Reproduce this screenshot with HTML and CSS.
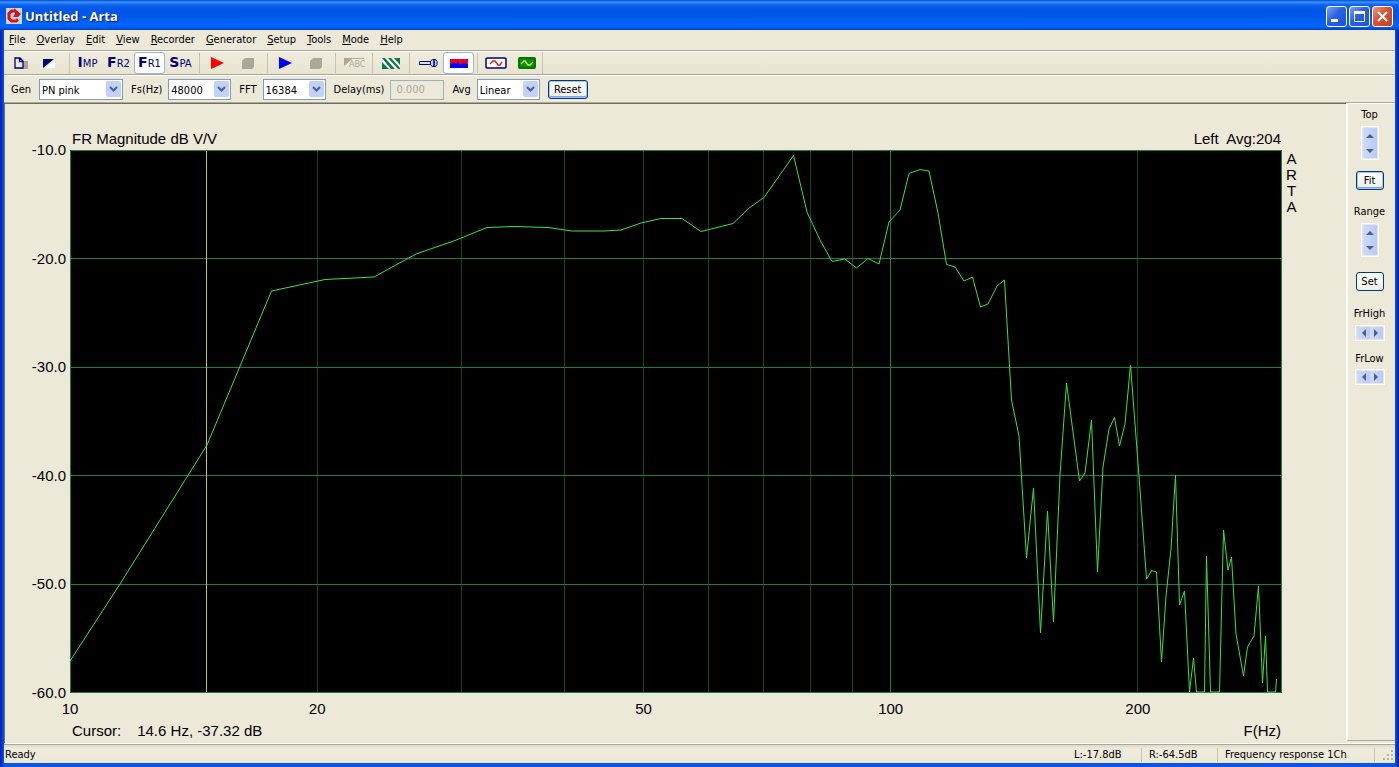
FILE: index.html
```html
<!DOCTYPE html>
<html lang="en">
<head>
<meta charset="utf-8">
<title>Untitled - Arta</title>
<link rel="stylesheet" href="styles.css">
</head>
<body>
<div class="window">
  <header class="titlebar">
    <svg class="app-icon" width="16" height="16" viewBox="0 0 16 16">
      <rect width="16" height="16" fill="#c8d8d8"/>
      <path d="M12 11.500l-2 1.500H5.500L3 10.500v-5L5.500 3H9" fill="none" stroke="#d81018" stroke-width="3"/>
      <path d="M8 0l7 6-3 3H7l2-3z" fill="#d81018"/>
    </svg>
    <h1 class="title">Untitled - Arta</h1>
    <div class="caption-buttons">
      <button class="caption" aria-label="Minimize"><svg width="19" height="19" viewBox="0 0 19 19"><rect x="4" y="12" width="7" height="3" fill="#fff"/></svg></button>
      <button class="caption" aria-label="Maximize"><svg width="19" height="19" viewBox="0 0 19 19"><path d="M4.500 5v9.500h10V5M4 5.500h11" fill="none" stroke="#fff"/><rect x="4" y="4" width="11" height="3" fill="#fff"/></svg></button>
      <button class="caption close" aria-label="Close"><svg width="19" height="19" viewBox="0 0 19 19"><path d="M5 5l9 9M14 5l-9 9" stroke="#fff" stroke-width="2.200"/></svg></button>
    </div>
  </header>

  <div class="client">
    <nav class="menubar">
      <button><u>F</u>ile</button><button><u>O</u>verlay</button><button><u>E</u>dit</button><button><u>V</u>iew</button><button><u>R</u>ecorder</button><button><u>G</u>enerator</button><button><u>S</u>etup</button><button><u>T</u>ools</button><button><u>M</u>ode</button><button><u>H</u>elp</button>
    </nav>

    <div class="toolbar">
      <div class="tools">
      <button class="tool" aria-label="New"><svg width="20" height="16" viewBox="0 0 20 16"><path d="M13 6h5v8H9v-1z" fill="#aca899"/><path d="M5 3h5l3 3v7H5zM9.500 3v3.500H13" fill="#ece9d8" stroke="#00007b" stroke-width="1.300"/></svg></button>
      <button class="tool" aria-label="Invert"><svg width="20" height="16" viewBox="0 0 20 16"><path d="M14 4v9H5z" fill="#fff"/><path d="M2 4h11L2 13z" fill="#00007b"/></svg></button>
      <span class="sep"></span>
      <button class="tool word"><b>I</b>MP</button>
      <button class="tool word"><b>F</b>R2</button>
      <button class="tool word pressed"><b>F</b>R1</button>
      <button class="tool word"><b>S</b>PA</button>
      <span class="sep"></span>
      <button class="tool" aria-label="Record"><svg width="20" height="16" viewBox="0 0 20 16"><path d="M3 2l13 6-13 6z" fill="#f00"/></svg></button>
      <button class="tool" aria-label="Stop recording"><svg width="20" height="16" viewBox="0 0 20 16"><path d="M6 3h9v9l-2 2H3V6z" fill="#aca899"/></svg></button>
      <span class="sep"></span>
      <button class="tool" aria-label="Play"><svg width="20" height="16" viewBox="0 0 20 16"><path d="M3 2l13 6-13 6z" fill="#00f"/></svg></button>
      <button class="tool" aria-label="Stop playing"><svg width="20" height="16" viewBox="0 0 20 16"><path d="M6 3h9v9l-2 2H3V6z" fill="#aca899"/></svg></button>
      <span class="sep"></span>
      <button class="tool abc" disabled><svg width="20" height="16" viewBox="0 0 20 16"><path d="M0 3h20v1H8L0 11z" fill="#aca899"/><path d="M2 11l6-6h11" fill="none" stroke="#fff"/></svg><span>ABC</span></button>
      <span class="sep"></span>
      <button class="tool" aria-label="Colors"><svg width="20" height="16" viewBox="0 0 20 16"><rect x="1" y="3" width="18" height="11" fill="#fff"/><path d="M1 3h3l10 11h-4zM1 7l7 7H1zM7 3h3l9 10v1h-2zM13 3h6v7z" fill="#087848"/></svg></button>
      <span class="sep"></span>
      <button class="tool" aria-label="Calibrate"><svg width="20" height="16" viewBox="0 0 20 16"><path d="M1.500 6.500h11v3h-11z" fill="#d8e0e8" stroke="#00007b"/><path d="M12.500 6l2-1.500h3l1.500 2v3l-1.500 2h-3l-2-1.500z" fill="#c8d0f0" stroke="#00007b"/><path d="M16 4v8" stroke="#00007b" stroke-width="1.500"/></svg></button>
      <button class="tool pressed" aria-label="Overlay fill"><svg width="20" height="16" viewBox="0 0 20 16"><rect x="1" y="4" width="18" height="9" fill="#00f"/><path d="M2 4h16l1 1v4h-2l-2-2-2 2-1 1-3-3-2 2-2-2-2 2-2-1V5z" fill="#f00020"/></svg></button>
      <span class="sep"></span>
      <button class="tool" aria-label="Time record"><svg width="22" height="16" viewBox="0 0 22 16"><rect x="1" y="3" width="20" height="10" rx="1" fill="#fff" stroke="#00007b" stroke-width="1.500"/><path d="M5 9l3-3h2l3 4h2l2-3" fill="none" stroke="#e02020" stroke-width="1.400"/></svg></button>
      <button class="tool" aria-label="Spectrum"><svg width="20" height="16" viewBox="0 0 20 16"><rect x="1" y="2" width="18" height="12" rx="2" fill="#007800"/><rect x="3" y="4" width="14" height="8" fill="#0a8c10"/><path d="M4 9l3-3h1l3 4h2l3-3" fill="none" stroke="#d8f040" stroke-width="1.300"/></svg></button>
      </div>
    </div>

    <form class="params">
      <label class="field gen"><span>Gen</span><span class="combo w84"><select><option>PN pink</option></select><svg class="drop" width="15" height="16" viewBox="0 0 15 16"><rect width="15" height="16" rx="2"/><path d="M4 6l3.500 3.500L11 6"/></svg></span></label>
      <label class="field"><span>Fs(Hz)</span><span class="combo"><select><option>48000</option></select><svg class="drop" width="15" height="16" viewBox="0 0 15 16"><rect width="15" height="16" rx="2"/><path d="M4 6l3.500 3.500L11 6"/></svg></span></label>
      <label class="field"><span>FFT</span><span class="combo"><select><option>16384</option></select><svg class="drop" width="15" height="16" viewBox="0 0 15 16"><rect width="15" height="16" rx="2"/><path d="M4 6l3.500 3.500L11 6"/></svg></span></label>
      <label class="field"><span>Delay(ms)</span><input type="text" value="0.000" disabled></label>
      <label class="field"><span>Avg</span><span class="combo"><select><option>Linear</option></select><svg class="drop" width="15" height="16" viewBox="0 0 15 16"><rect width="15" height="16" rx="2"/><path d="M4 6l3.500 3.500L11 6"/></svg></span></label>
      <button type="button" class="push default">Reset</button>
    </form>

    <div class="content">
      <main class="graph">
        <div class="heading"><span>FR Magnitude dB V/V</span><span class="avg">Left&nbsp; Avg:204</span></div>
        <div class="y-axis"><span>-10.0</span><span>-20.0</span><span>-30.0</span><span>-40.0</span><span>-50.0</span><span>-60.0</span></div>
        <div class="plot">
          <svg viewBox="70 150 1212 543" preserveAspectRatio="none" role="img" aria-label="Frequency response magnitude">
            <rect x="70" y="150" width="1212" height="543" fill="#000"/>
            <path class="minor" d="M317.500 150v543M461.500 150v543M564.500 150v543M643.500 150v543M708.500 150v543M763.500 150v543M810.500 150v543M852.500 150v543M1137.500 150v543"/>
            <path class="major" d="M890.500 150v543M70 258.500h1212M70 367.500h1212M70 475.500h1212M70 584.500h1212M70.500 150.500h1211v542h-1211z"/>
            <path class="cursor" d="M206.500 151v541"/>
            <polyline class="trace" points="70,661 120,584 207,445 271.500,291 325,279.500 374,277 416,254 455,240.500 487,227.500 515,226.500 548,227.500 572,231 604,231 621,230 641,223 661,218.500 682,218.500 701,231.500 733,223.500 749,208 764,197.500 793.500,155.500 807,212 820,240 832,261.500 845,259 856.500,268 868,258.500 879,264 889,222 900,210 909,173.500 920,169.500 929,171 938,213 946.500,264.500 955,267 964,281 972.500,277 980.500,307 988,304 997,286 1004.500,280 1011.500,400 1019,436 1026.500,558 1033.500,488 1040.500,633 1047.500,511 1053.500,622 1060,475 1066.500,383 1079.500,481 1085,473 1091.500,420 1097.500,572 1103,467 1109,429 1114.500,417.500 1119.500,446 1125,424 1130.500,365 1139,476 1146.500,579 1151.500,570.500 1156.500,572 1161.500,662 1166,596 1171,549 1175.500,475 1179.500,605 1184.500,591 1189.500,692 1193.500,658 1196.500,692 1204.500,692 1206.500,556 1210.500,692 1219.500,692 1223.500,530 1228,570 1231.500,557 1236,634 1243.500,676 1247.500,647 1254,636 1258.500,586 1262.500,683 1265.500,636 1267.500,692 1275.500,692 1276.500,679"/>
          </svg>
        </div>
        <div class="brand"><span>A</span><span>R</span><span>T</span><span>A</span></div>
        <div class="x-axis"><span>10</span><span>20</span><span>50</span><span>100</span><span>200</span></div>
        <div class="footing"><span>Cursor:</span><span>14.6 Hz, -37.32 dB</span><span class="unit">F(Hz)</span></div>
      </main>

      <aside class="side">
        <div class="group"><span>Top</span>
          <div class="spin vertical"><button aria-label="Top up"><svg width="12" height="13" viewBox="0 0 12 13"><path d="M2 9h8L6 5z"/></svg></button><button aria-label="Top down"><svg width="12" height="13" viewBox="0 0 12 13"><path d="M2 5h8L6 9z"/></svg></button></div>
          <button class="push small default">Fit</button></div>
        <div class="group range"><span>Range</span>
          <div class="spin vertical"><button aria-label="Range up"><svg width="12" height="13" viewBox="0 0 12 13"><path d="M2 9h8L6 5z"/></svg></button><button aria-label="Range down"><svg width="12" height="13" viewBox="0 0 12 13"><path d="M2 5h8L6 9z"/></svg></button></div>
          <button class="push small">Set</button></div>
        <div class="group fr"><span>FrHigh</span>
          <div class="spin"><button aria-label="FrHigh down"><svg width="13" height="12" viewBox="0 0 13 12"><path d="M9 2v8L5 6z"/></svg></button><button aria-label="FrHigh up"><svg width="13" height="12" viewBox="0 0 13 12"><path d="M4 2v8l4-4z"/></svg></button></div></div>
        <div class="group fr"><span>FrLow</span>
          <div class="spin"><button aria-label="FrLow down"><svg width="13" height="12" viewBox="0 0 13 12"><path d="M9 2v8L5 6z"/></svg></button><button aria-label="FrLow up"><svg width="13" height="12" viewBox="0 0 13 12"><path d="M4 2v8l4-4z"/></svg></button></div></div>
      </aside>
    </div>

    <footer class="statusbar">
      <span class="ready">Ready</span><span class="level">L:-17.8dB</span><span class="level second">R:-64.5dB</span><span class="mode">Frequency response 1Ch</span>
      <svg class="grip" width="20" height="16" viewBox="0 0 20 16"><path d="M16 3h2v2h-2zM12 7h2v2h-2zM16 7h2v2h-2zM8 11h2v2H8zM12 11h2v2h-2zM16 11h2v2h-2z" fill="#b8b4a2"/></svg>
    </footer>
  </div>
</div>
</body>
</html>
```
FILE: styles.css
```css
* { box-sizing: border-box; }
body {
  margin: 0;
  font: 11px/14px "DejaVu Sans Condensed", "Noto Sans", sans-serif;
  color: #000;
  background: #0a3fc4;
}
button, select, input { font: inherit; color: inherit; margin: 0; }
button { padding: 0; border: 0; background: none; }
svg { display: block; }

.window {
  min-height: 100vh;
  display: flex;
  flex-direction: column;
  padding: 0 4px 4px;
  background: linear-gradient(to right, #0019b8, #0a55e8 4px, #0a55e8 calc(100% - 4px), #0019a0);
}
.titlebar {
  height: 30px;
  margin: 0 -4px;
  padding: 2px 6px 0;
  display: flex;
  align-items: center;
  background: linear-gradient(#0448c8 0, #3a92ff 2px, #0a62ec 5px, #0055e5 10px, #0058ea 17px, #0066ff 25px, #0060f8 27px, #0040c0 30px);
}
.title {
  flex: 1;
  margin: 0;
  padding-left: 3px;
  font: bold 13px/18px "Open Sans", "Noto Sans", sans-serif;
  color: #fff;
  text-shadow: 1px 1px 1px #0a1883;
}
.caption-buttons { display: flex; gap: 2px; }
.caption {
  width: 21px;
  height: 21px;
  border: 1px solid #fff;
  border-radius: 3px;
  background: linear-gradient(135deg, #7ba4f5, #2a5fe0 45%, #1c54d8);
}
.close { background: linear-gradient(135deg, #ee9a80, #dc5030 45%, #c8401c); }

.client { flex: 1; display: flex; flex-direction: column; background: #ece9d8; }
.menubar {
  display: flex;
  height: 21px;
  padding: 0 0 0 5px;
  gap: 11px;
  border-bottom: 1px solid #aca899;
}
.toolbar {
  height: 24px;
  border-top: 1px solid #fff;
  border-bottom: 1px solid #aca899;
  background: linear-gradient(#efecdc, #e8e4d0);
  display: flex;
}
.tools { display: flex; border-right: 1px solid #c8c4b2; }
.tool {
  width: 31px;
  height: 22px;
  display: flex;
  align-items: center;
  justify-content: center;
  border: 1px solid transparent;
  border-radius: 3px;
}
.pressed { background: #fff; border-color: #98b5e2; }
.word { font: 10px/14px "DejaVu Sans", sans-serif; color: #00007b; align-items: baseline; padding-top: 2px; }
.word b { font-size: 14px; }
.sep { width: 6px; height: 20px; margin-top: 1px; background: linear-gradient(#c5c2b0, #c5c2b0) center / 1px 100% no-repeat; }
.abc { position: relative; color: #aca899; }
.abc span { position: absolute; left: 10px; top: 6px; font: 8px/12px "DejaVu Sans", sans-serif; }

.params {
  height: 28px;
  display: flex;
  align-items: center;
  gap: 8px;
  padding: 1px 0 0 7px;
  border-top: 1px solid #fff;
  border-bottom: 1px solid #aca899;
}
.field { display: flex; align-items: center; gap: 6px; }
.field > span:first-child { padding-top: 1px; }
.gen { gap: 8px; }
.combo { position: relative; width: 63px; }
.w84 { width: 84px; }
.combo select {
  appearance: none;
  display: block;
  width: 100%;
  height: 21px;
  padding: 2px 2px 0;
  border: 1px solid #7f9db9;
  border-radius: 0;
  background: #fff;
}
.drop { position: absolute; right: 2px; top: 2px; pointer-events: none; }
.drop rect { fill: #c1d1fb; }
.drop path { fill: none; stroke: #4d6185; stroke-width: 2; }
.field input {
  width: 54px;
  height: 20px;
  padding: 0 5px;
  border: 1px solid #9fb0bb;
  background: #ece9d8;
  color: #aca899;
}
.push {
  width: 40px;
  height: 19px;
  padding-top: 1px;
  border: 1px solid #003c74;
  border-radius: 3px;
  background: linear-gradient(#fff, #f0efe8);
}
.small { width: 28px; }
.default { box-shadow: inset 0 0 0 1px #a6c4f5, inset 0 -1px 0 1px #7da2e8; }

.content { flex: 1; display: flex; border-bottom: 1px solid #fff; }
.graph {
  flex: 1;
  display: grid;
  grid-template-columns: 65px 1fr 64px;
  grid-template-rows: 46px 1fr 50px;
  border-top: 1px solid #716f64;
  border-left: 1px solid #716f64;
  font: 15px/18px "Liberation Sans", Arial, sans-serif;
}
.heading {
  grid-column: 2;
  display: flex;
  justify-content: space-between;
  align-items: flex-end;
  padding: 0 1px 2px 2px;
}
.y-axis {
  grid-column: 1;
  grid-row: 2;
  display: flex;
  flex-direction: column;
  justify-content: space-between;
  padding-right: 4px;
}
.y-axis span { height: 0; line-height: 0; text-align: right; }
.plot { grid-column: 2; grid-row: 2; position: relative; }
.plot svg { position: absolute; width: 100%; height: 100%; }
.plot path { fill: none; vector-effect: non-scaling-stroke; }
.minor { stroke: #0b4a25; }
.plot .major { stroke: #128040; }
.cursor { stroke: #c8c048; }
.trace { fill: none; stroke: #3fe03f; vector-effect: non-scaling-stroke; }
.brand { grid-column: 3; grid-row: 2; display: flex; flex-direction: column; padding: 1px 0 0 3px; width: 16px; text-align: center; line-height: 16px; }
.x-axis {
  grid-column: 2;
  grid-row: 3;
  display: grid;
  grid-template-columns: 247fr 326fr 247fr 247fr 144fr;
  height: 24px;
  padding-top: 7px;
}
.x-axis span { width: 0; display: flex; justify-content: center; }
.footing {
  grid-column: 2;
  grid-row: 3;
  align-self: end;
  display: flex;
  gap: 16px;
  padding: 0 1px 3px 2px;
}
.unit { margin-left: auto; }

.side {
  width: 49px;
  margin-bottom: 2px;
  padding: 4px 4px 0 0;
  border-left: 2px solid #fff;
  border-top: 1px solid #fff;
  border-bottom: 1px solid #aca899;
}
.group { display: flex; flex-direction: column; align-items: center; gap: 4px; }
.group .push { margin-top: 7px; }
.range { margin-top: 15px; }
.range .push { margin-top: 11px; }
.fr { margin-top: 16px; }
.fr + .fr { margin-top: 11px; gap: 3px; }
.spin { display: flex; border: 1px solid #fff; }
.vertical { flex-direction: column; padding: 1px; }
.spin button { background: linear-gradient(to right, #cddafe, #b9cafa); }
.vertical button { padding: 1px; }
.spin path { fill: #4d6185; }
.spin:not(.vertical) { height: 16px; padding: 1px; }

.statusbar {
  height: 19px;
  padding-top: 2px;
  display: flex;
  align-items: center;
  border-top: 1px solid #aca899;
  background: linear-gradient(#dedac8, #efecdd 4px, #ece9d8);
}
.ready { flex: 1; padding-left: 1px; }
.level { width: 68px; border-right: 1px solid #c8c4b2; }
.second { width: 76px; padding-left: 7px; }
.mode { width: 157px; padding-left: 7px; border-right: 1px solid #c8c4b2; }
```
